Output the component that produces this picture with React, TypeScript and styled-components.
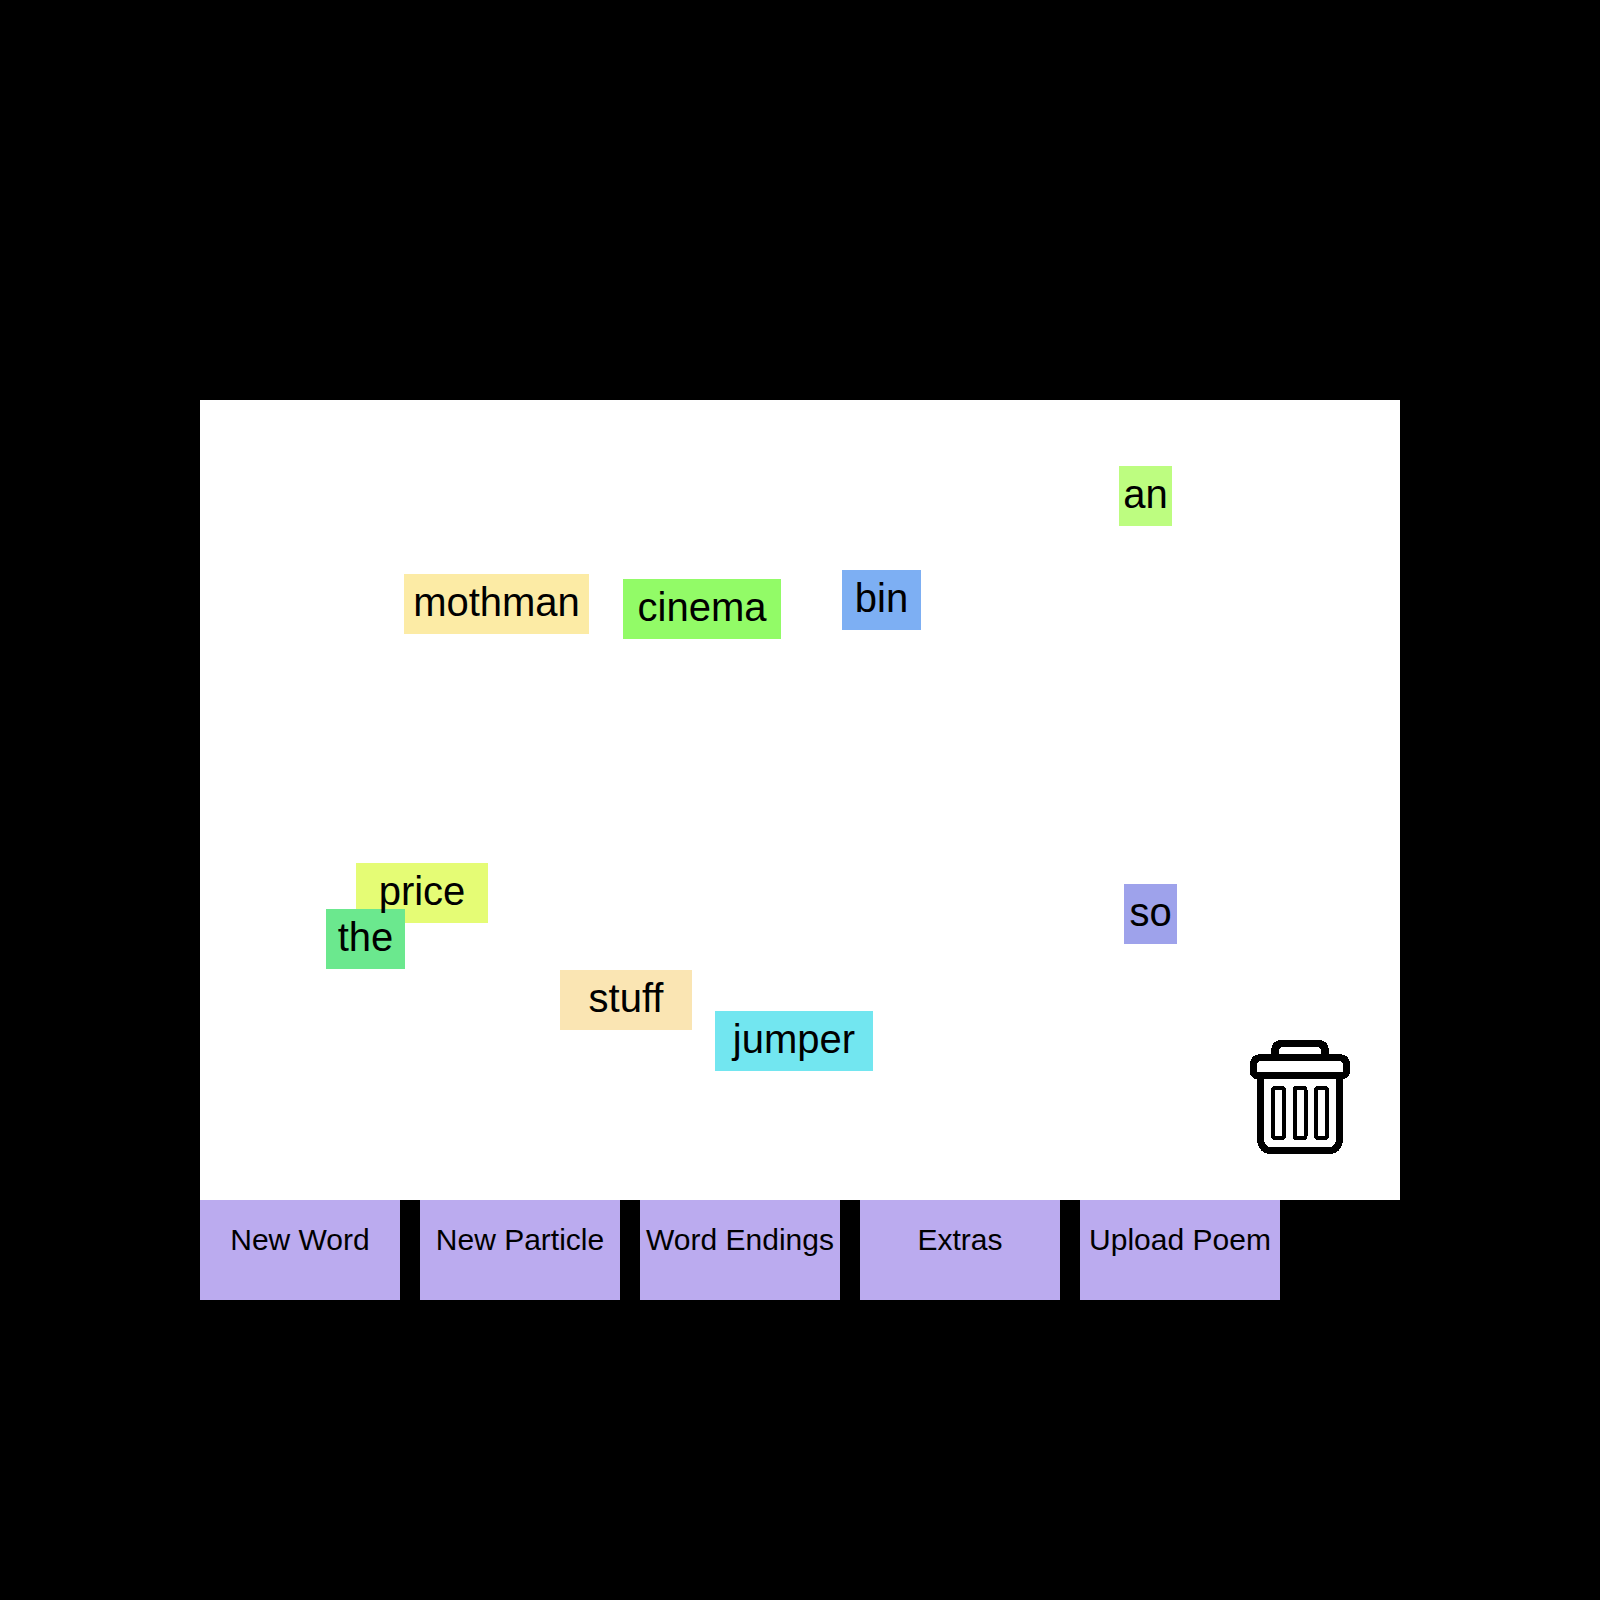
import React from "react";
import styled, { createGlobalStyle } from "styled-components";

const GlobalStyle = createGlobalStyle`
  * {
    box-sizing: border-box;
  }

  body {
    margin: 0;
    background: #000000;
    color: #000000;
    font-family: "Liberation Sans", Helvetica, Arial, sans-serif;
  }
`;

const Page = styled.main`
  min-height: 100vh;
  padding: 25vw 12.5vw 0;
`;

const Board = styled.section`
  position: relative;
  display: flex;
  align-items: flex-end;
  justify-content: flex-end;
  padding: 46px 50px;
  aspect-ratio: 3 / 2;
  background: #ffffff;
`;

const Tile = styled.div<{ $x: number; $y: number; $width: number; $color: string }>`
  position: absolute;
  left: ${({ $x }) => $x}px;
  top: ${({ $y }) => $y}px;
  width: ${({ $width }) => $width}px;
  height: 60px;
  background: ${({ $color }) => $color};
  font-size: 40px;
  line-height: 56px;
  text-align: center;
  white-space: nowrap;
  cursor: grab;
`;

/* Lettering always stays above every tile's background. */
const TileText = styled.span`
  position: relative;
  z-index: 1;
`;

const TrashButton = styled.button`
  display: block;
  padding: 0;
  border: 0;
  background: none;
  cursor: pointer;

  svg {
    display: block;
  }
`;

const Toolbar = styled.nav`
  display: flex;
  flex-wrap: wrap;
  gap: 20px;
`;

const ToolButton = styled.button`
  width: 200px;
  height: 100px;
  padding: 0 0 20px;
  border: 0;
  background: #bbabef;
  color: #000000;
  font-family: inherit;
  font-size: 30px;
  line-height: 40px;
  white-space: nowrap;
  cursor: pointer;
`;

const LETTER_WIDTH = 26.4;

const tiles = [
  { word: "mothman", x: 204, y: 174, color: "#fceba5" },
  { word: "cinema", x: 423, y: 179, color: "#92fb67" },
  { word: "bin", x: 642, y: 170, color: "#7daff3" },
  { word: "an", x: 919, y: 66, color: "#bdfd80" },
  { word: "price", x: 156, y: 463, color: "#e5fc75" },
  { word: "the", x: 126, y: 509, color: "#6be88e" },
  { word: "stuff", x: 360, y: 570, color: "#fae5b3" },
  { word: "jumper", x: 515, y: 611, color: "#72e6f0" },
  { word: "so", x: 924, y: 484, color: "#9ea2eb" },
];

const tools = ["New Word", "New Particle", "Word Endings", "Extras", "Upload Poem"];

function TrashIcon() {
  return (
    <svg
      width="100"
      height="114"
      viewBox="0 0 100 114"
      fill="none"
      stroke="#000000"
      strokeWidth="7"
      shapeRendering="crispEdges"
      aria-hidden="true"
    >
      <path d="M25 16V11Q25 3.5 33 3.5H67Q75 3.5 75 11V16" strokeWidth="7.5" />
      <path d="M12 17.5H88Q96.5 17.5 96.5 25V31Q96.5 35.5 92 35.5H8Q3.5 35.5 3.5 31V25Q3.5 17.5 12 17.5Z" />
      <path d="M10.5 36V100Q12 110.5 21 110.5H79Q88 110.5 89.5 100V36" />
      <g strokeWidth="4">
        <rect x="23" y="48" width="11" height="50" rx="2" />
        <rect x="44.5" y="48" width="11" height="50" rx="2" />
        <rect x="66" y="48" width="11" height="50" rx="2" />
      </g>
    </svg>
  );
}

export default function App() {
  return (
    <>
      <GlobalStyle />
      <Page>
        <Board aria-label="Poem board">
          {tiles.map(({ word, x, y, color }) => (
            <Tile
              key={word}
              $x={x}
              $y={y}
              $width={Math.round(word.length * LETTER_WIDTH)}
              $color={color}
            >
              <TileText>{word}</TileText>
            </Tile>
          ))}
          <TrashButton type="button" aria-label="Trash">
            <TrashIcon />
          </TrashButton>
        </Board>
        <Toolbar>
          {tools.map((tool) => (
            <ToolButton key={tool} type="button">
              {tool}
            </ToolButton>
          ))}
        </Toolbar>
      </Page>
    </>
  );
}
